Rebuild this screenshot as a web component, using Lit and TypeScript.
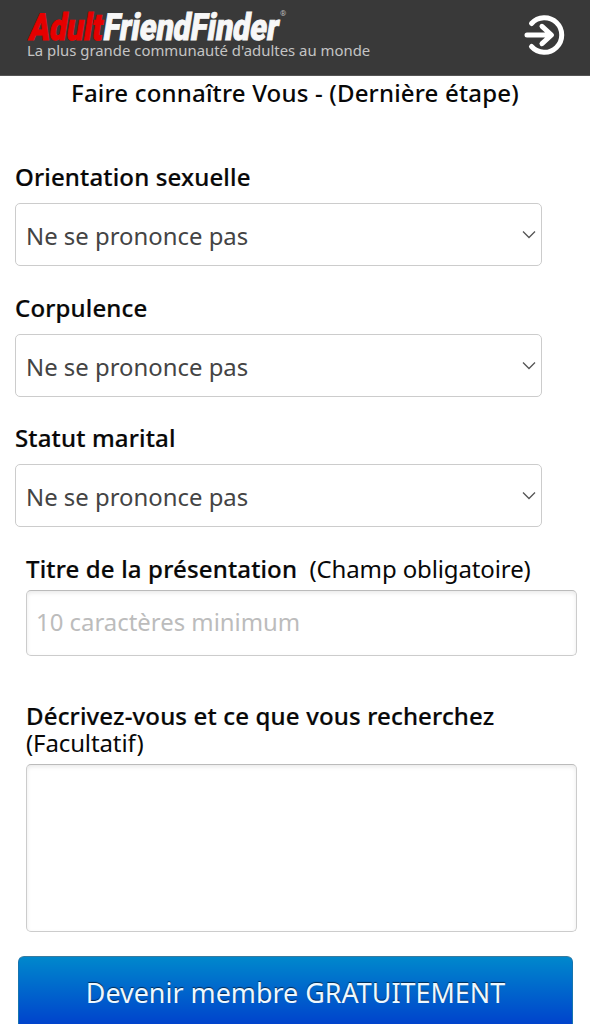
import { LitElement, html, css } from "lit";
import { customElement, property } from "lit/decorators.js";

@customElement("select-field")
class SelectField extends LitElement {
  @property() label = "";
  @property() value = "";

  static styles = css`
    :host { display: block; height: 130.5px; }
    .label {
      font-weight: 500; font-size: 24px; line-height: 33px; height: 43px; color: #080808; white-space: nowrap;
      letter-spacing: .16px; -webkit-text-stroke: .2px #080808;
    }
    .box {
      box-sizing: border-box; width: 527px; height: 63px; border: 1px solid #ccc; border-radius: 5px;
      display: flex; align-items: center; justify-content: space-between; padding: 2px 5px 0 10px;
      font-size: 23.9px; color: #444; background: #fff;
    }
    .arrow { width: 14px; height: 9px; margin-top: -2px; }
  `;

  render() {
    return html`
      <div class="label">${this.label}</div>
      <div class="box">
        <span>${this.value}</span>
        <svg class="arrow" viewBox="0 0 14 9" fill="none" stroke="#555" stroke-width="1.3"><path d="M1 1.5 L7 7.5 L13 1.5" /></svg>
      </div>
    `;
  }
}

@customElement("app-root")
class AppRoot extends LitElement {
  static styles = css`
    :host {
      display: block; height: 1024px; overflow: hidden; background: #fff; color: #080808;
      font-family: "Noto Sans", "Open Sans", sans-serif; font-size: 24px;
    }
    .header {
      box-sizing: border-box; height: 76px; background: #393939; border-bottom: 1px solid #555;
      display: flex; justify-content: space-between; padding: 0 24px 0 27px;
    }
    .brand { display: flex; flex-direction: column; }
    .logo { display: block; width: 270px; height: 41px; overflow: visible; }
    .tagline { color: #c4c4c4; font-size: 14.9px; line-height: 18px; white-space: nowrap; }
    .enter { width: 42px; height: 42px; margin-top: 14px; }
    .title { margin: 0; height: 84px; line-height: 34px; font-size: 24px; font-weight: 500; text-align: center; white-space: nowrap; letter-spacing: .18px; }
    .selects { padding-left: 15px; height: 392px; }
    .entry { padding-left: 26px; width: 551px; }
    .caption { line-height: 34px; height: 38px; white-space: pre; letter-spacing: -.12px; }
    .caption b, .describe b { font-weight: 500; letter-spacing: .16px; -webkit-text-stroke: .2px #080808; }
    .describe { margin-top: 46px; height: 62px; line-height: 27px; letter-spacing: -.12px; }
    .describe b { display: block; }
    .input, .area {
      box-sizing: border-box; display: block; width: 551px; margin: 0; border: 1px solid #ccc; border-top-color: #bbb;
      border-radius: 5px; padding: 0 9px; font: inherit; font-size: 23.9px; color: #444; background: #fff;
      box-shadow: inset 0 2px 4px #00000016; outline: none; resize: none;
    }
    .input { height: 66px; padding-bottom: 3px; }
    .input::placeholder { color: #bcbcbc; opacity: 1; }
    .area { height: 168px; }
    .submit {
      box-sizing: border-box; display: block; width: 555px; height: 80px; margin: 24px 0 0 18px; padding: 0 0 7px;
      border: 1px solid #1674ae; border-top-color: #397b9f; border-radius: 6px;
      background: linear-gradient(#0088cc, #0044cc 85%); color: #eef8ff;
      font: 400 26.9px "Noto Sans", "Open Sans", sans-serif; text-shadow: 0 -1px 1px #0009; white-space: nowrap;
    }
  `;

  render() {
    return html`
      <div class="header">
        <div class="brand">
          <svg class="logo" viewBox="0 0 270 41" font-family="Roboto, 'Liberation Sans', sans-serif" font-weight="900">
            <g transform="translate(1 40) skewX(-9)" font-size="37.5">
              <text x="0" y="0" textLength="73" lengthAdjust="spacingAndGlyphs" fill="#e60000" stroke="#e60000" stroke-width=".9">Adult</text>
              <text x="74" y="0" textLength="175" lengthAdjust="spacingAndGlyphs" fill="#f7f7f7" stroke="#f7f7f7" stroke-width=".9">FriendFinder</text>
            </g>
            <text x="253" y="16" font-size="8" font-weight="400" fill="#bbb">®</text>
          </svg>
          <div class="tagline">La plus grande communauté d'adultes au monde</div>
        </div>
        <svg class="enter" viewBox="0 0 42 42" fill="none" stroke="#fff" stroke-width="5" stroke-linecap="round" stroke-linejoin="round">
          <path d="M7.5 9.5 A17.3 17.3 0 1 1 7.5 32.5" />
          <path d="M3 21 H27 M18 12.3 L27.5 21 L18 29.7" />
        </svg>
      </div>
      <h1 class="title">Faire connaître Vous - (Dernière étape)</h1>
      <div class="selects">
        <select-field label="Orientation sexuelle" value="Ne se prononce pas"></select-field>
        <select-field label="Corpulence" value="Ne se prononce pas"></select-field>
        <select-field label="Statut marital" value="Ne se prononce pas"></select-field>
      </div>
      <div class="entry">
        <div class="caption"><b>Titre de la présentation</b>  (Champ obligatoire)</div>
        <input class="input" placeholder="10 caractères minimum" />
        <div class="describe"><b>Décrivez-vous et ce que vous recherchez</b>(Facultatif)</div>
        <textarea class="area"></textarea>
      </div>
      <button class="submit">Devenir membre GRATUITEMENT</button>
    `;
  }
}
